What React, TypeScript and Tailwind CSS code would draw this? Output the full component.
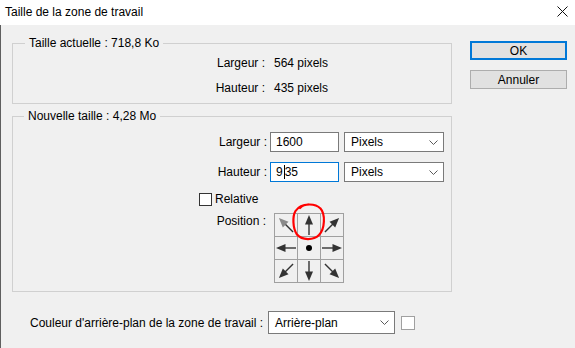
import React from 'react';

const font = 'font-["Liberation_Sans",Arial,sans-serif]';

const Chevron: React.FC = () => (
    <svg width="9" height="5" viewBox="0 0 9 5" className="shrink-0">
        <path d="M0.5 0.5 L4.5 4.5 L8.5 0.5" fill="none" stroke="#5a5a5a" strokeWidth="1"/>
    </svg>
);

const Combo: React.FC<{value: string; className: string}> = ({value, className}) => (
    <div className={`flex items-center justify-between border border-[#7a7a7a] bg-white pl-[6px] pr-[5px] ${className}`}>
        <span>{value}</span>
        <Chevron/>
    </div>
);

const Arrow: React.FC<{deg: number; head?: string}> = ({deg, head = '#333'}) => (
    <svg width="22" height="22" viewBox="0 0 22 22">
        <g transform={`rotate(${deg} 11 11)`}>
            <line x1="11" y1="21" x2="11" y2="9" stroke="#333" strokeWidth="1.4"/>
            <polygon points="11,1 7,10.5 15,10.5" fill={head}/>
        </g>
    </svg>
);

const cells: (number | null)[] = [-45, 0, 45, -90, null, 90, -135, 180, 135];

const PositionGrid: React.FC = () => (
    <div className="relative">
        <div className="grid grid-cols-[repeat(3,23px)] border-l border-t border-[#a0a0a0]">
            {cells.map((deg, i) => (
                <div key={i} className="flex h-[23px] w-[23px] items-center justify-center border-b border-r border-[#a0a0a0]">
                    {deg === null ? (
                        <span className="h-[6px] w-[6px] rounded-full bg-black"/>
                    ) : (
                        <Arrow deg={deg} head={deg === -45 ? '#8a8a8a' : '#333'}/>
                    )}
                </div>
            ))}
        </div>
        {/* annotation drawn over the grid */}
        <svg className="pointer-events-none absolute left-[17px] top-[-11px]" width="36" height="40" viewBox="0 0 36 40">
            <path
                d="M9 6 C13 1.5 24 1 29.5 6.5 C34.5 12 34 27 28 33 C22.5 38.5 11 38.5 6 32.5 C1.5 26 1.5 14 4.5 9 C7.5 4.5 12 2.5 17.5 2.5"
                fill="none"
                stroke="#f00"
                strokeWidth="2.2"
                strokeLinecap="round"
            />
        </svg>
    </div>
);

export default function App() {
    return (
        <div className={`h-[348px] w-[575px] overflow-hidden bg-[#f0f0f0] text-[12px] leading-[16px] text-black ${font}`}>
            <div className="flex h-[25px] items-center justify-between bg-white pb-[2px] pl-[5px] pr-[7px]">
                <span>Taille de la zone de travail</span>
                <svg width="11" height="11" viewBox="0 0 11 11">
                    <path d="M0.5 0.5 L10.5 10.5 M10.5 0.5 L0.5 10.5" stroke="#111" strokeWidth="1"/>
                </svg>
            </div>

            <div className="flex h-[323px] border-l border-[#5f5f5f] pl-[11px]">
                <div className="w-[440px]">
                    <fieldset className="mt-[10px] border border-[#d0d0d0] px-0 pb-[7px] pt-[4px]">
                        <legend className="ml-[12px] px-[4px]">Taille actuelle : 718,8 Ko</legend>
                        <div className="flex flex-col gap-[9px]">
                            <div className="flex">
                                <span className="w-[252px] text-right">Largeur :</span>
                                <span className="ml-[9px]">564 pixels</span>
                            </div>
                            <div className="flex">
                                <span className="w-[252px] text-right">Hauteur :</span>
                                <span className="ml-[9px]">435 pixels</span>
                            </div>
                        </div>
                    </fieldset>

                    <fieldset className="mt-[4px] border border-[#d0d0d0] px-0 pb-[8px] pt-[8px]">
                        <legend className="ml-[11px] px-[4px]">Nouvelle taille : 4,28 Mo</legend>
                        <div className="flex items-center">
                            <span className="w-[254px] text-right">Largeur :</span>
                            <div className="ml-[3px] flex h-[20px] w-[69px] items-center border border-[#7a7a7a] bg-white pl-[5px]">1600</div>
                            <Combo value="Pixels" className="ml-[5px] h-[20px] w-[100px]"/>
                        </div>
                        <div className="mt-[10px] flex items-center">
                            <span className="w-[254px] text-right">Hauteur :</span>
                            <div className="ml-[3px] flex h-[20px] w-[69px] items-center border border-[#0078d7] bg-white pl-[5px]">
                                9<span className="ml-[1px] inline-block h-[14px] w-px bg-black"/>35
                            </div>
                            <Combo value="Pixels" className="ml-[5px] h-[20px] w-[100px]"/>
                        </div>
                        <div className="mt-[9px] flex items-center">
                            <span className="ml-[186px] h-[13px] w-[13px] border border-[#333] bg-white"/>
                            <span className="ml-[3px]">Relative</span>
                        </div>
                        <div className="mt-[6px] flex items-start">
                            <span className="w-[253px] text-right">Position :</span>
                            <div className="ml-[8px]">
                                <PositionGrid/>
                            </div>
                        </div>
                    </fieldset>

                    <div className="mt-[19px] flex items-center pl-[18px]">
                        <span>Couleur d'arrière-plan de la zone de travail :</span>
                        <Combo value="Arrière-plan" className="ml-[5px] h-[23px] w-[127px]"/>
                        <span className="ml-[6px] h-[14px] w-[14px] border border-[#a0a0a0] bg-white"/>
                    </div>
                </div>

                <div className="ml-[18px] mt-[16px] flex w-[97px] flex-col gap-[10px]">
                    <button className="flex h-[19px] items-center justify-center border-2 border-[#0078d7] bg-[#e1e1e1]">OK</button>
                    <button className="flex h-[19px] items-center justify-center border border-[#adadad] bg-[#e1e1e1]">Annuler</button>
                </div>
            </div>
        </div>
    );
}
